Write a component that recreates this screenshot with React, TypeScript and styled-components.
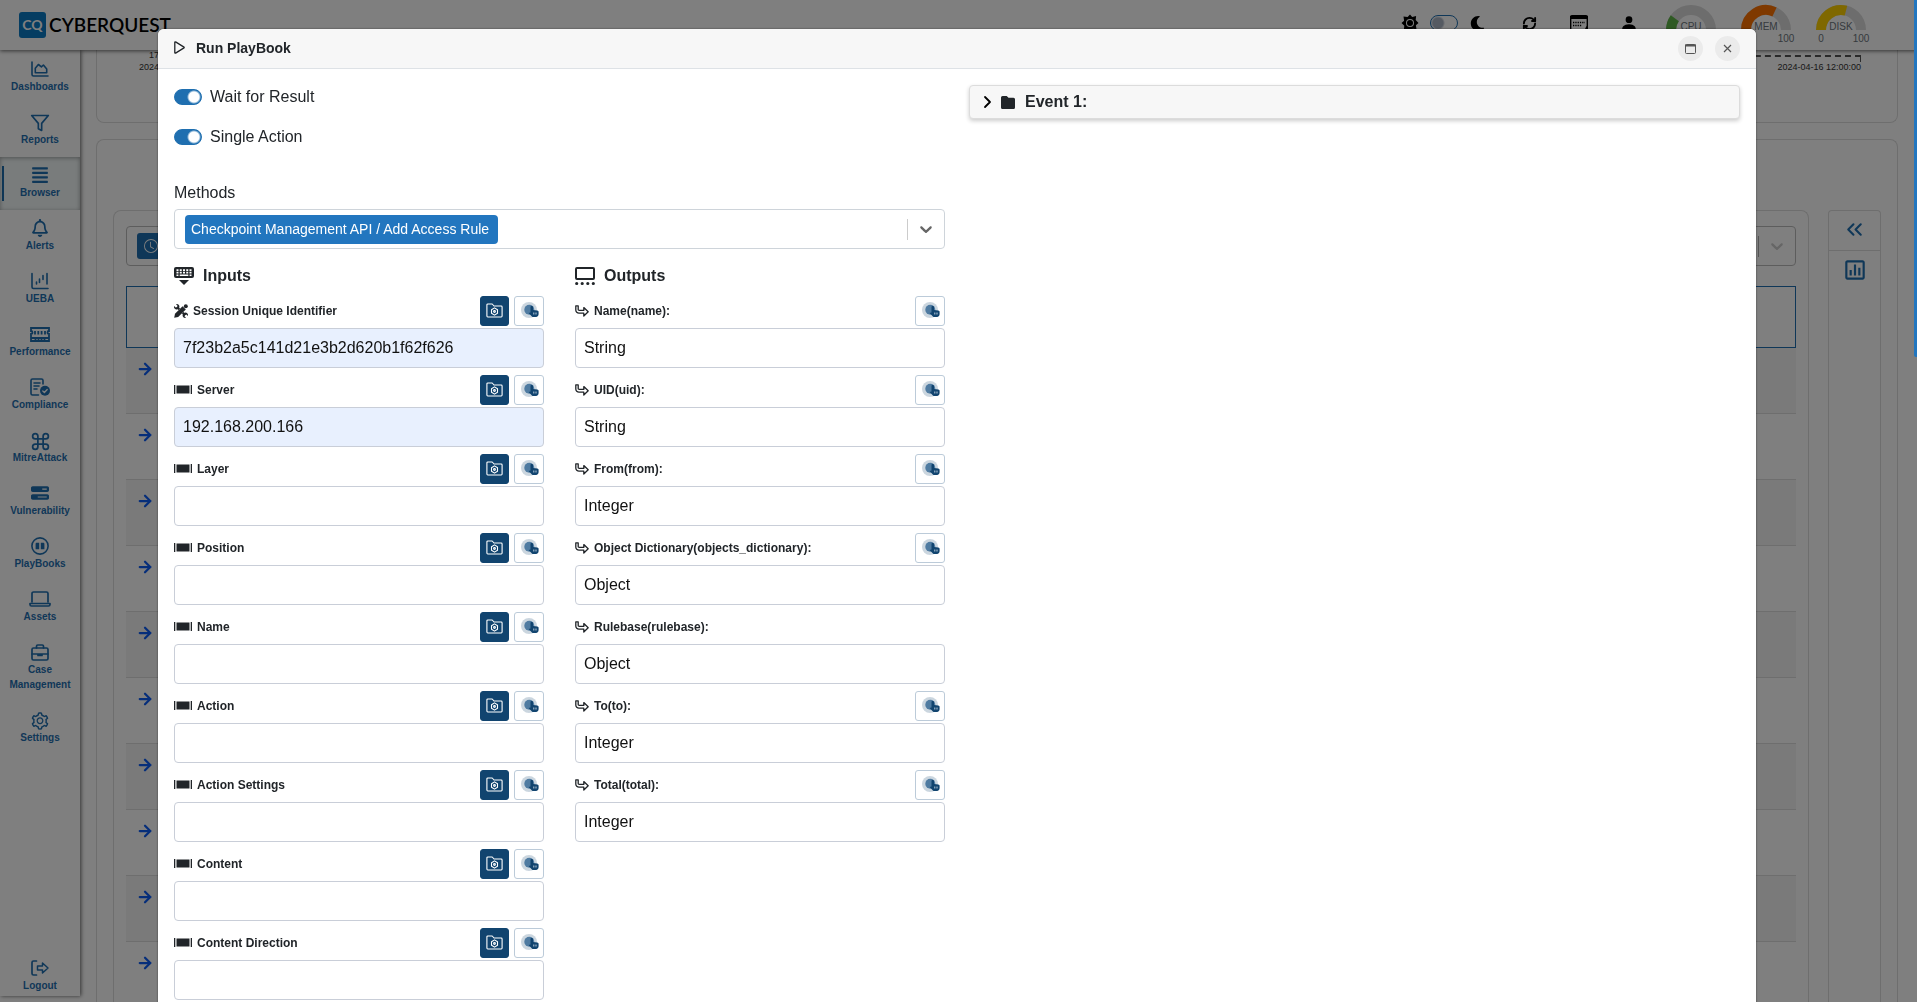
import React, { useState } from "react";
import styled, { createGlobalStyle, css } from "styled-components";
import { AiOutlineSetting } from "react-icons/ai";
import { FiFilter, FiCommand } from "react-icons/fi";
import { FaAlignJustify, FaRegBell, FaMoon } from "react-icons/fa";
import { FaBarsProgress } from "react-icons/fa6";
import { BiBarChartSquare } from "react-icons/bi";
import { LuChevronsLeft, LuArrowRight, LuRefreshCw } from "react-icons/lu";
import { BsClock, BsPersonFill } from "react-icons/bs";

const blue = "#1f6fb0";
const navy = "#11446f";
const line = "#ced4da";
const ink = "#212529";

const GlobalStyle = createGlobalStyle`
  *, *::before, *::after { box-sizing: border-box; }
  body {
    margin: 0;
    overflow: hidden;
    font-family: "Liberation Sans", Arial, sans-serif;
    font-size: 16px;
    line-height: 24px;
    color: ${ink};
    background: #fff;
  }
  button, input, select { font: inherit; color: inherit; }
  svg { display: block; flex: none; overflow: visible; }
`;

/* ---------- page behind the dialog ---------- */

const Page = styled.div`
  display: flex;
  flex-direction: column;
  height: 100vh;
  overflow: hidden;
`;

const TopBar = styled.header`
  display: flex;
  justify-content: space-between;
  height: 50px;
  flex: none;
  padding: 0 51px 0 19px;
  z-index: 1;
  background: #fff;
  box-shadow: 0 1px 4px rgba(0, 0, 0, 0.6);
`;

const Brand = styled.a`
  display: flex;
  align-items: center;
  gap: 3px;
  font-family: Lato, "Liberation Sans", sans-serif;
  font-size: 19px;
  font-weight: 600;
  color: #000;
  text-decoration: none;
`;

const BrandMark = styled.span`
  display: grid;
  place-items: center;
  width: 27px;
  height: 26px;
  border-radius: 3px;
  background: #0a7ac4;
  color: #fff;
  font-size: 14px;
  font-weight: 700;
`;

const Tools = styled.div`
  display: flex;
  align-items: flex-start;
  color: #000;
`;

const IconRow = styled.div`
  display: flex;
  align-items: center;
  gap: 32px;
  height: 46px;
  margin-right: 28px;
`;

const ThemeSwitch = styled.label`
  display: flex;
  align-items: center;
  gap: 12px;
  margin-right: 3px;
`;

const ToolIcon = styled.span`
  display: grid;
  place-items: center;
  width: 18px;
  height: 24px;
`;

const GaugeRow = styled.div`
  display: flex;
  gap: 25px;
  padding-top: 5px;
`;

const GaugeBox = styled.div`
  width: 50px;
  font-size: 10px;
  line-height: 12px;
  color: #6c757d;
`;

const Columns = styled.div`
  display: flex;
  flex: 1;
  min-height: 0;
`;

const Sidebar = styled.nav`
  display: flex;
  flex-direction: column;
  width: 80px;
  flex: none;
  margin-bottom: 6px;
  padding-top: 1px;
  background: #fff;
  box-shadow: 1px 0 4px rgba(0, 0, 0, 0.6);
`;

const NavLink = styled.a<{ $active?: boolean; $last?: boolean }>`
  display: flex;
  flex-direction: column;
  align-items: center;
  gap: 1px;
  padding: 9px 6px ${(p) => (p.$last ? 3 : 10)}px;
  font-size: 10px;
  line-height: 15px;
  font-weight: 700;
  text-align: center;
  text-decoration: none;
  color: ${blue};
  ${(p) => p.$last && css`margin-top: auto;`}
  ${(p) =>
    p.$active &&
    css`
      background: linear-gradient(${blue}, ${blue}) 2px center / 2px 35px no-repeat #f2f8f8;
      box-shadow: inset 0 1px 4px rgba(0, 0, 0, 0.35);
    `}
`;

const NavIcon = styled.span`
  display: grid;
  place-items: center;
  height: 18px;
`;

const Main = styled.main`
  display: flex;
  flex-direction: column;
  gap: 16px;
  flex: 1;
  min-width: 0;
  padding: 0 19px 0 16px;
`;

const ChartCard = styled.section`
  height: 73px;
  flex: none;
  padding: 5px 36px 0 42px;
  border: 1px solid #dcdcdc;
  border-top: 0;
  border-radius: 0 0 8px 8px;
`;

const Axis = styled.div`
  height: 7px;
  margin-left: 44px;
  border-top: 2px dashed #555;
  border-right: 1px solid #555;
`;

const AxisLabels = styled.div`
  display: flex;
  align-items: flex-end;
  justify-content: space-between;
  margin-top: -13px;
  font-size: 9px;
  line-height: 12px;
  color: #333;
`;

const AxisTime = styled.span`
  display: block;
  padding-left: 10px;
`;

const BrowserCard = styled.section`
  display: flex;
  align-items: stretch;
  gap: 19px;
  flex: 1;
  min-height: 0;
  padding: 70px 16px 0;
  border: 1px solid #dcdcdc;
  border-bottom: 0;
  border-radius: 8px 8px 0 0;
`;

const ResultCard = styled.div`
  flex: 1;
  min-width: 0;
  padding: 15px 12px 0;
  border: 1px solid #dcdcdc;
  border-bottom: 0;
  border-radius: 8px 8px 0 0;
`;

const RangeBox = styled.div`
  display: flex;
  align-items: center;
  justify-content: space-between;
  height: 40px;
  padding: 0 8px 0 10px;
  border: 1px solid #bbb;
  border-radius: 4px;
`;

const ClockButton = styled.button`
  display: grid;
  place-items: center;
  width: 28px;
  height: 26px;
  padding: 0;
  border: 0;
  border-radius: 3px;
  background: ${blue};
  color: #fff;
`;

const Indicator = styled.span<{ $soft?: boolean }>`
  display: flex;
  align-items: center;
  gap: 8px;
  color: ${(p) => (p.$soft ? "#ccc" : "#666")};
  &::before {
    content: "";
    width: 1px;
    height: 21px;
    background: ${(p) => (p.$soft ? "#aaa" : "#ccc")};
  }
`;

const Results = styled.ul`
  margin: 20px 0 0;
  padding: 0;
  list-style: none;
  &::before {
    content: "";
    display: block;
    height: 62px;
    border: 1px solid ${blue};
  }
`;

const ResultRow = styled.li`
  display: flex;
  height: 66px;
  padding: 12px 10px 0;
  border-bottom: 1px solid #dcdcdc;
  color: #0d5df5;
  &:nth-child(odd) { background: #f5f5f5; }
`;

const SidePanel = styled.aside`
  width: 53px;
  flex: none;
  border: 1px solid #dcdcdc;
  border-bottom: 0;
  border-radius: 4px 4px 0 0;
`;

const PanelButton = styled.button`
  display: grid;
  place-items: center;
  width: 100%;
  height: 40px;
  padding: 0 0 2px;
  border: 0;
  border-bottom: 1px solid #dcdcdc;
  background: none;
  color: ${blue};
  &:last-child { border-bottom: 0; }
`;

/* ---------- dialog ---------- */

const Backdrop = styled.div`
  position: fixed;
  inset: 0;
  z-index: 10;
  overflow: hidden;
  padding: 29px 161px 0 158px;
  background: rgba(0, 0, 0, 0.5);
`;

const ScrollMark = styled.div`
  position: fixed;
  top: 0;
  right: 0;
  z-index: 11;
  width: 3px;
  height: 357px;
  border-radius: 0 0 0 2px;
  background: #2276bf;
`;

const Dialog = styled.section`
  min-height: 100%;
  border-radius: 6px 6px 0 0;
  overflow: hidden;
  background: #fff;
  box-shadow: 0 0 2px rgba(0, 0, 0, 0.6);
`;

const DialogHeader = styled.header`
  display: flex;
  align-items: center;
  gap: 12px;
  height: 40px;
  padding: 0 16px;
  border-bottom: 1px solid #dee2e6;
  background: #f7f7f7;
`;

const DialogTitle = styled.h1`
  display: flex;
  align-items: center;
  gap: 11px;
  flex: 1;
  margin: 0;
  padding-bottom: 2px;
  font-size: 14px;
  line-height: 20px;
`;

const RoundButton = styled.button`
  display: grid;
  place-items: center;
  width: 25px;
  height: 25px;
  padding: 0;
  border: 0;
  border-radius: 50%;
  background: #ebebeb;
  color: #555;
`;

const DialogBody = styled.div`
  display: grid;
  grid-template-columns: 1fr 1fr;
  align-items: start;
  gap: 24px;
  padding: 16px;
`;

const SwitchLabel = styled.label`
  display: flex;
  align-items: center;
  gap: 8px;
  height: 24px;
  margin-bottom: 16px;
`;

const Switch = styled.input`
  appearance: none;
  width: 28px;
  height: 16px;
  margin: 0;
  border: 1px solid ${blue};
  border-radius: 8px;
  background: radial-gradient(circle at 7px 7px, #aab4c4 5px, transparent 7px);
  &:checked {
    background: radial-gradient(circle at 19px 7px, #fff 5px, ${blue} 7px);
  }
`;

const MethodsLabel = styled.label`
  display: block;
  margin-top: 32px;
`;

const MethodsBox = styled.div`
  display: flex;
  align-items: center;
  justify-content: space-between;
  height: 40px;
  margin: 4px 0 15px;
  padding: 0 8px 0 10px;
  border: 1px solid ${line};
  border-radius: 4px;
`;

const MethodSelect = styled.select`
  appearance: none;
  height: 29px;
  padding: 0 6px;
  border: 0;
  border-radius: 4px;
  background: #2276bf;
  color: #fff;
  font-size: 14px;
`;

const FieldColumns = styled.div`
  display: grid;
  grid-template-columns: 1fr 1fr;
  gap: 31px;
`;

const GroupTitle = styled.h2`
  display: flex;
  align-items: center;
  gap: 9px;
  height: 24px;
  margin: 0 0 8px;
  font-size: 16px;
  line-height: 24px;
`;

const Field = styled.div`
  margin-bottom: 7px;
`;

const FieldHead = styled.div`
  display: flex;
  align-items: center;
  gap: 5px;
  height: 30px;
  margin-bottom: 2px;
`;

const FieldLabel = styled.label`
  display: flex;
  align-items: center;
  gap: 5px;
  flex: 1;
  font-size: 12px;
  line-height: 18px;
  font-weight: 700;
`;

const SquareButton = styled.button<{ $dark?: boolean }>`
  display: grid;
  place-items: center;
  width: ${(p) => (p.$dark ? 29 : 30)}px;
  height: 30px;
  padding: 0 0 2px;
  border: 1px solid ${(p) => (p.$dark ? navy : "#bccbd9")};
  border-radius: 3px;
  background: ${(p) => (p.$dark ? navy : "#fff")};
  color: ${(p) => (p.$dark ? "#fff" : navy)};
`;

const TextBox = styled.input<{ $filled?: boolean }>`
  display: block;
  width: 100%;
  height: 40px;
  padding: 0 8px;
  border: 1px solid #c9ced8;
  border-radius: 4px;
  background: ${(p) => (p.$filled ? "#e8f0fe" : "#fff")};
  color: #111;
`;

const EventButton = styled.button`
  display: flex;
  align-items: center;
  gap: 10px;
  width: 100%;
  height: 34px;
  padding: 0 14px;
  border: 1px solid #dcdcdc;
  border-radius: 4px;
  background: #f7f7f7;
  box-shadow: 0 2px 4px rgba(0, 0, 0, 0.2);
  font-weight: 700;
`;

/* ---------- drawings ---------- */

const stroke = { fill: "none", stroke: "currentColor", strokeWidth: 2, strokeLinecap: "round", strokeLinejoin: "round" } as const;

const DashboardIcon = () => (
  <svg width="18" height="16" viewBox="0 0 18 16" {...stroke} strokeWidth={1.6}>
    <path d="M1 1v12.500a1.500 1.500 0 0 0 1.500 1.500H17" />
    <path d="M4.300 11.800V7.300L7.400 3.500l3 2.300 2-1.800 3.300 4v3.800z" />
  </svg>
);
const UebaIcon = () => (
  <svg width="18" height="18" viewBox="0 0 18 18" {...stroke} strokeWidth={1.6}>
    <path d="M1 1.500v13.500a1.500 1.500 0 0 0 1.500 1.500H17" />
    <path d="M5.500 10v2M8.500 7v3.500M12 3.500v4M16 1.500v10.500" />
  </svg>
);
const RamIcon = () => (
  <svg width="20" height="15" viewBox="0 0 20 15" {...stroke} strokeWidth={1.8}>
    <path d="M1 1h18v3a1.500 1.500 0 0 0 0 3v7H1V7a1.500 1.500 0 0 0 0-3zM1 11h18" strokeLinejoin="miter" />
    <path d="M5 4v3.500M8.300 4v3.500M11.600 4v3.500M15 4v3.500M5.500 12v1.500M8.500 12v1.500M11.500 12v1.500M14.500 12v1.500" strokeLinecap="butt" />
  </svg>
);
const ComplianceIcon = () => (
  <svg width="20" height="18" viewBox="0 0 20 18" {...stroke} strokeWidth={1.6}>
    <path d="M8.500 17H2.500A1.500 1.500 0 0 1 1 15.500v-13A1.500 1.500 0 0 1 2.500 1h9A1.500 1.500 0 0 1 13 2.500V6" />
    <path d="M4 5h6M4 8h5M4 11h3" />
    <circle cx="15" cy="12.800" r="5" fill="currentColor" stroke="none" />
    <path d="M12.800 13l1.600 1.500 2.800-3" stroke="#fff" strokeWidth={1.3} />
  </svg>
);
const PlaybookIcon = () => (
  <svg width="18" height="18" viewBox="0 0 18 18">
    <circle cx="9" cy="9" r="8.100" fill="none" stroke="currentColor" strokeWidth="1.600" />
    <path d="M5.200 5.800h3v6.400H4.600V6.400zM9.800 5.800h3l.6.600v5.800H9.800z" fill="currentColor" />
  </svg>
);
const LaptopIcon = () => (
  <svg width="22" height="16" viewBox="0 0 22 16" {...stroke} strokeWidth={1.7}>
    <path d="M3 11V2.500A1.500 1.500 0 0 1 4.500 1h13A1.500 1.500 0 0 1 19 2.500V11" />
    <path d="M1 12.500h20v1a1.500 1.500 0 0 1-1.500 1.500h-17A1.500 1.500 0 0 1 1 13.500z" />
  </svg>
);
const CaseIcon = () => (
  <svg width="18" height="17" viewBox="0 0 18 17" {...stroke} strokeWidth={1.7}>
    <rect x="1" y="4" width="16" height="12" rx="1.500" />
    <path d="M5.500 4V2.200A1.200 1.200 0 0 1 6.700 1h4.600a1.200 1.200 0 0 1 1.200 1.200V4M1 10h16M7 10.500v1h4v-1" />
  </svg>
);
const LogoutIcon = () => (
  <svg width="18" height="16" viewBox="0 0 18 16" {...stroke} strokeWidth={1.7}>
    <path d="M5.500 1H2.500A1.500 1.500 0 0 0 1 2.500v11A1.500 1.500 0 0 0 2.500 15h3" />
    <path d="M6.500 6h5V3l5.500 5-5.500 5v-3h-5z" strokeWidth={1.5} />
  </svg>
);
const SunIcon = () => (
  <svg width="16" height="16" viewBox="0 0 16 16">
    <path
      fillRule="evenodd"
      fill="currentColor"
      d="M8-.5l2.200 2.600 3.900-1-.4 3.800 2.800 3.100-2.600 2.300.6 4-3.700-.5L8 16.500l-2.200-2.600-3.900.6.400-3.800L-.5 8l2.600-2.300L1.500 1.500l4.100.6zM8 4a4 4 0 1 0 0 8 4 4 0 0 0 0-8z"
    />
    <circle cx="8" cy="8" r="3" fill="currentColor" />
  </svg>
);
const CalendarIcon = () => (
  <svg width="18" height="16" viewBox="0 0 18 16">
    <rect x="0.700" y="0.700" width="16.600" height="14.600" rx="1.200" fill="none" stroke="currentColor" strokeWidth="1.400" />
    <path d="M0 1h18v3H0z" fill="currentColor" />
    <path d="M3 7.500h12M3 10.500h9" stroke="currentColor" strokeWidth="1.300" strokeDasharray="1.300 1" />
    <path d="M14 16l2.500-5 1.500 2v3z" fill="currentColor" />
  </svg>
);
const PlayIcon = () => (
  <svg width="11" height="13" viewBox="0 0 11 13" {...stroke} strokeWidth={1.3}>
    <path d="M.8 1.300v10.400a.5.500 0 0 0 .8.400l8.400-5.200a.5.500 0 0 0 0-.8L1.600.9a.5.500 0 0 0-.8.400z" />
  </svg>
);
const KeyboardIcon = () => (
  <svg width="20" height="18" viewBox="0 0 20 18">
    <rect x="0" y="0" width="20" height="11" rx="2" fill="currentColor" />
    <path d="M2.500 3.200h15M2.500 5.700h15" stroke="#fff" strokeWidth="1.700" strokeDasharray="2 1.250" />
    <path d="M2.500 8.300h1.900M5.700 8.300h8.600M15.600 8.300h1.900" stroke="#fff" strokeWidth="1.600" />
    <path d="M5 13h10l-5 5z" fill="currentColor" />
  </svg>
);
const PenWrenchIcon = () => (
  <svg width="14" height="14" viewBox="0 0 14 14">
    <path d="M3.200 3.200l8 8" stroke="currentColor" strokeWidth="2.200" />
    <path d="M2 .2l1.500 1.600-.4 1.300-1.400.3L.1 2A2.600 2.600 0 0 0 3.500 5.300l1.800-1.800A2.600 2.600 0 0 0 2 .2zM12 13.800l-1.500-1.600.4-1.300 1.400-.3 1.600 1.400a2.600 2.600 0 0 0-3.400-3.300l-1.800 1.800a2.600 2.600 0 0 0 3.300 3.300z" fill="currentColor" />
    <path d="M1.500 12.500L12 2" stroke="#fff" strokeWidth="4.600" />
    <path d="M.2 13.800l.8-4L8.600 2.200l3.200 3.200L4.200 13z" fill="currentColor" />
    <circle cx="11.800" cy="2.200" r="2" fill="currentColor" />
  </svg>
);
const CarouselIcon = () => (
  <svg width="18" height="10" viewBox="0 0 18 10" fill="currentColor">
    <path d="M0 0h1.300v9H0zM16.700 0H18v9h-1.300zM2.500 .5h13v8h-13z" />
  </svg>
);
const GalleryIcon = () => (
  <svg width="20" height="18" viewBox="0 0 20 18">
    <rect x="1" y="1" width="18" height="11" rx="1" fill="none" stroke="currentColor" strokeWidth="2" />
    <path d="M1.700 16.500h.01M7.200 16.500h.01M12.800 16.500h.01M18.300 16.500h.01" stroke="currentColor" strokeWidth="3.200" strokeLinecap="round" />
  </svg>
);
const TurnIcon = () => (
  <svg width="14" height="12" viewBox="0 0 14 12" {...stroke} strokeWidth={1.3}>
    <path d="M.8.800h2.400v3.600a1 1 0 0 0 1 1h4.600V2.600l4.400 4.100-4.400 4.300V8.200H4A3.200 3.200 0 0 1 .8 5z" />
  </svg>
);
const FolderGearIcon = () => (
  <svg width="17" height="15" viewBox="0 0 17 15" {...stroke} strokeWidth={1.1}>
    <path d="M1.800 1h4.400l1.800 2h7.200a.9.900 0 0 1 .9.900v9.200a.9.900 0 0 1-.9.900H1.800a.9.900 0 0 1-.9-.9V1.900A.9.900 0 0 1 1.800 1z" />
    <path d="M8.500 4.900l3 1.800v3.600l-3 1.800-3-1.800V6.700z" />
    <circle cx="8.500" cy="8.500" r="0.900" />
  </svg>
);
const TouchIcon = () => (
  <svg width="18" height="16" viewBox="-1 0 18 16">
    <circle cx="8" cy="8" r="8" fill={navy} opacity="0.220" />
    <circle cx="8.300" cy="7.700" r="5" fill="#4f7ba1" />
    <path d="M10.500 4c1 0 1.500.5 1.500 1.300v2.700l4.300.5c.8.100 1.300.6 1.300 1.400v2.200c0 1.600-1 2.900-2.600 2.900h-2.600c-1 0-1.600-.4-2.200-1.200L7.600 11l1.900-.5V5.300c0-.8.300-1.300 1-1.300z" fill={navy} />
    <path d="M12.800 10.500v2M15 10.500v2" stroke="#a9bfd2" strokeWidth="1.100" />
  </svg>
);
const ChevronDown = () => (
  <svg width="20" height="20" viewBox="0 0 20 20" fill="currentColor">
    <path d="M4.516 7.548c.436-.446 1.043-.481 1.576 0L10 11.295l3.908-3.747c.533-.481 1.141-.446 1.574 0 .436.445.408 1.197 0 1.615-.406.418-4.695 4.502-4.695 4.502a1.095 1.095 0 0 1-1.576 0S4.924 9.581 4.516 9.163s-.436-1.170 0-1.615z" />
  </svg>
);

const Gauge = ({ name, value, color }: { name: string; value: number; color: string }) => {
  const a = Math.PI * (1 - value / 100);
  const x = 25 + 20 * Math.cos(a);
  const y = 25 - 20 * Math.sin(a);
  return (
    <GaugeBox>
      <svg width="50" height="42" viewBox="0 0 50 42" fontSize="10" textAnchor="middle" fill="currentColor">
        <path d="M5 25a20 20 0 0 1 40 0" fill="none" stroke="#dadada" strokeWidth="10" />
        <path d={`M5 25A20 20 0 0 1 ${x} ${y}`} fill="none" stroke={color} strokeWidth="10" />
        <text x="25" y="25">{name}</text>
        <text x="5" y="37">0</text>
        <text x="45" y="37">100</text>
      </svg>
    </GaugeBox>
  );
};

/* ---------- data ---------- */

const navItems: { label: string; icon: React.ReactNode; active?: boolean }[] = [
  { label: "Dashboards", icon: <DashboardIcon /> },
  { label: "Reports", icon: <FiFilter size={20} /> },
  { label: "Browser", icon: <FaAlignJustify size={18} />, active: true },
  { label: "Alerts", icon: <FaRegBell size={18} /> },
  { label: "UEBA", icon: <UebaIcon /> },
  { label: "Performance", icon: <RamIcon /> },
  { label: "Compliance", icon: <ComplianceIcon /> },
  { label: "MitreAttack", icon: <FiCommand size={21} /> },
  { label: "Vulnerability", icon: <FaBarsProgress size={18} /> },
  { label: "PlayBooks", icon: <PlaybookIcon /> },
  { label: "Assets", icon: <LaptopIcon /> },
  { label: "Case Management", icon: <CaseIcon /> },
  { label: "Settings", icon: <AiOutlineSetting size={20} /> },
];

const inputs = [
  { label: "Session Unique Identifier", value: "7f23b2a5c141d21e3b2d620b1f62f626", tool: true },
  { label: "Server", value: "192.168.200.166" },
  { label: "Layer" },
  { label: "Position" },
  { label: "Name" },
  { label: "Action" },
  { label: "Action Settings" },
  { label: "Content" },
  { label: "Content Direction" },
];

const outputs = [
  { label: "Name(name):", value: "String" },
  { label: "UID(uid):", value: "String" },
  { label: "From(from):", value: "Integer" },
  { label: "Object Dictionary(objects_dictionary):", value: "Object" },
  { label: "Rulebase(rulebase):", value: "Object", plain: true },
  { label: "To(to):", value: "Integer" },
  { label: "Total(total):", value: "Integer" },
];

const InputField = ({ label, value = "", tool }: { label: string; value?: string; tool?: boolean }) => {
  const [text, setText] = useState(value);
  const id = `in-${label.replace(/\W/g, "")}`;
  return (
    <Field>
      <FieldHead>
        <FieldLabel htmlFor={id}>
          {tool ? <PenWrenchIcon /> : <CarouselIcon />}
          {label}
        </FieldLabel>
        <SquareButton $dark type="button" aria-label={`Browse ${label}`}><FolderGearIcon /></SquareButton>
        <SquareButton type="button" aria-label={`Pick ${label}`}><TouchIcon /></SquareButton>
      </FieldHead>
      <TextBox id={id} $filled={value !== ""} value={text} onChange={(e) => setText(e.target.value)} />
    </Field>
  );
};

const OutputField = ({ label, value, plain }: { label: string; value: string; plain?: boolean }) => {
  const id = `out-${label.replace(/\W/g, "")}`;
  return (
    <Field>
      <FieldHead>
        <FieldLabel htmlFor={id}>
          <TurnIcon />
          {label}
        </FieldLabel>
        {!plain && <SquareButton type="button" aria-label={`Pick ${label}`}><TouchIcon /></SquareButton>}
      </FieldHead>
      <TextBox id={id} value={value} readOnly />
    </Field>
  );
};

export default function App() {
  return (
    <>
      <GlobalStyle />
      <Page>
        <TopBar>
          <Brand href="#"><BrandMark>CQ</BrandMark>CYBERQUEST</Brand>
          <Tools>
            <IconRow>
              <ThemeSwitch>
                <SunIcon />
                <Switch type="checkbox" aria-label="Dark theme" />
                <FaMoon size={15} />
              </ThemeSwitch>
              <ToolIcon><LuRefreshCw size={15} strokeWidth={3} /></ToolIcon>
              <ToolIcon><CalendarIcon /></ToolIcon>
              <ToolIcon><BsPersonFill size={18} /></ToolIcon>
            </IconRow>
            <GaugeRow>
              <Gauge name="CPU" value={20} color="#5fb548" />
              <Gauge name="MEM" value={64} color="#ff7300" />
              <Gauge name="DISK" value={58} color="#ffd000" />
            </GaugeRow>
          </Tools>
        </TopBar>
        <Columns>
          <Sidebar>
            {navItems.map((n) => (
              <NavLink key={n.label} href="#" $active={n.active}>
                <NavIcon>{n.icon}</NavIcon>
                {n.label}
              </NavLink>
            ))}
            <NavLink href="#" $last><NavIcon><LogoutIcon /></NavIcon>Logout</NavLink>
          </Sidebar>
          <Main>
            <ChartCard>
              <Axis />
              <AxisLabels>
                <span><AxisTime>17:00:00</AxisTime>2024-04-15</span>
                <span>2024-04-16 12:00:00</span>
              </AxisLabels>
            </ChartCard>
            <BrowserCard>
              <ResultCard>
                <RangeBox>
                  <ClockButton type="button" aria-label="Time range"><BsClock size={14} /></ClockButton>
                  <Indicator $soft><ChevronDown /></Indicator>
                </RangeBox>
                <Results>
                  {Array.from({ length: 10 }, (_, i) => (
                    <ResultRow key={i}><LuArrowRight size={18} strokeWidth={3} /></ResultRow>
                  ))}
                </Results>
              </ResultCard>
              <SidePanel>
                <PanelButton type="button" aria-label="Expand panel"><LuChevronsLeft size={25} /></PanelButton>
                <PanelButton type="button" aria-label="Charts"><BiBarChartSquare size={26} /></PanelButton>
              </SidePanel>
            </BrowserCard>
          </Main>
        </Columns>
      </Page>

      <Backdrop>
        <Dialog role="dialog" aria-labelledby="dialog-title">
          <DialogHeader>
            <DialogTitle id="dialog-title"><PlayIcon />Run PlayBook</DialogTitle>
            <RoundButton type="button" aria-label="Maximize">
              <svg width="11" height="10" viewBox="0 0 11 10">
                <rect x="0.500" y="0.500" width="10" height="9" rx="1" fill="none" stroke="currentColor" />
                <path d="M0 1.500h11" stroke="currentColor" strokeWidth="2" />
              </svg>
            </RoundButton>
            <RoundButton type="button" aria-label="Close">
              <svg width="9" height="9" viewBox="0 0 9 9">
                <path d="M1 1l7 7M8 1l-7 7" stroke="currentColor" strokeWidth="1.200" />
              </svg>
            </RoundButton>
          </DialogHeader>
          <DialogBody>
            <div>
              <SwitchLabel><Switch type="checkbox" defaultChecked />Wait for Result</SwitchLabel>
              <SwitchLabel><Switch type="checkbox" defaultChecked />Single Action</SwitchLabel>
              <MethodsLabel htmlFor="methods">Methods</MethodsLabel>
              <MethodsBox>
                <MethodSelect id="methods">
                  <option>Checkpoint Management API / Add Access Rule</option>
                </MethodSelect>
                <Indicator><ChevronDown /></Indicator>
              </MethodsBox>
              <FieldColumns>
                <div>
                  <GroupTitle><KeyboardIcon />Inputs</GroupTitle>
                  {inputs.map((f) => <InputField key={f.label} {...f} />)}
                </div>
                <div>
                  <GroupTitle><GalleryIcon />Outputs</GroupTitle>
                  {outputs.map((f) => <OutputField key={f.label} {...f} />)}
                </div>
              </FieldColumns>
            </div>
            <EventButton type="button" aria-expanded="false">
              <svg width="7" height="12" viewBox="0 0 7 12"><path d="M1 1l5 5-5 5" fill="none" stroke="#000" strokeWidth="1.800" strokeLinecap="round" strokeLinejoin="round" /></svg>
              <svg width="14" height="13" viewBox="0 0 14 13"><path d="M1.500 0h4.200L7.500 1.800h5A1.500 1.500 0 0 1 14 3.300v8.200a1.500 1.500 0 0 1-1.500 1.500h-11A1.500 1.500 0 0 1 0 11.500v-10A1.500 1.500 0 0 1 1.500 0z" fill={ink} /></svg>
              Event 1:
            </EventButton>
          </DialogBody>
        </Dialog>
      </Backdrop>
      <ScrollMark />
    </>
  );
}
